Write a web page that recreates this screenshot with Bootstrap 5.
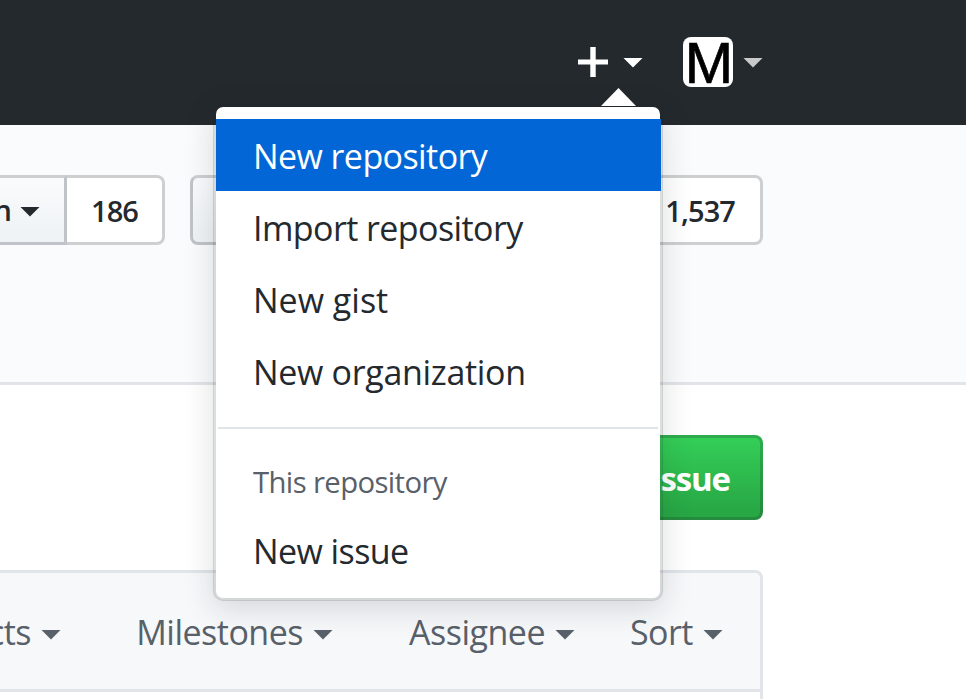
<!DOCTYPE html>
<html lang="en">
<head>
<meta charset="utf-8">
<meta name="viewport" content="width=device-width, initial-scale=1">
<title>Issues</title>
<link href="https://cdn.jsdelivr.net/npm/bootstrap@5.3.0/dist/css/bootstrap.min.css" rel="stylesheet">
<style>
body{font-family:"Open Sans","Noto Sans",sans-serif;font-size:34px;line-height:1.5;color:#24292e;overflow:hidden;height:699px}
.topbar{height:125px;background:#24292e;padding:0 203px 1px 0}
.topbar .tri{margin-top:1px}
.plus-icon{display:block;margin-right:15px}
.avatar{width:50px;height:50px;border-radius:8px;background:#fff;margin:0 10px 0 40px;display:block}
.avatar text{font:58px "Liberation Sans",sans-serif;stroke:#000;stroke-width:.7px}
.pagehead{height:260px;background:#fafbfc;border-bottom:3px solid #e1e4e8;padding:50px 203px 0 0}
.main-area{padding:50px 203px 0 0}
.tri{width:20px;height:10px;flex:none;background:currentColor;clip-path:polygon(0 0,100% 0,50% 100%)}
.dim{color:#c8c9ca}
.btn-social,.social-count{height:70px;border:3px solid #cdcfd1;font-size:29px;font-weight:600;line-height:66px;letter-spacing:-.9px;white-space:nowrap}
.btn-social{background:linear-gradient(#fafbfc,#eff3f6 90%)}
.watch{width:67px;border-color:#cdcfd1 #c0c4c9 #c0c4c9;border-left:0}
.watch .tri{margin:3px 24px 0 9px}
.social-count{background:#fff;border-left:0;border-radius:0 8px 8px 0}
.forks{width:98px}
.stars{width:104px;padding-right:25px}
.star{width:469px;margin-left:25px;border-radius:8px 0 0 8px;border-color:#cdcfd1 #c0c4c9 #c0c4c9}
.btn-issue,.btn-issue:hover{height:85px;width:240px;border-radius:8px;border:3px solid rgba(27,31,35,.2);background:linear-gradient(#34d058,#28a745 90%) border-box;color:#fff;font-size:33px;font-weight:700;line-height:82px;padding:0 30px 0 0;text-align:right;letter-spacing:-1.1px}
.list-box{margin-top:50px;margin-left:-20px;height:129px;border:3px solid #e1e4e8;border-bottom:0;border-radius:8px 8px 0 0}
.filters{height:119px;background:#f6f8fa;border-bottom:3px solid #e1e4e8;border-radius:5px 5px 0 0;color:#586069;padding:3px 37px 0 0;letter-spacing:-.5px;line-height:51px}
.filters .tri{margin:4px 0 0 10px}
.f2{width:272px}
.f3{width:242px}
.f4{width:148px}
.create-menu{left:213px;top:104px;width:450px;background:#fff;background-clip:padding-box;border:3px solid rgba(27,31,35,.15);border-radius:10px;box-shadow:0 8px 30px rgba(27,31,35,.15);padding:12px 0;z-index:5}
.create-menu .entry{display:block;height:72px;line-height:75px;padding-left:37px;color:#24292e;text-decoration:none;white-space:nowrap;letter-spacing:-.58px}
.create-menu .entry.current{background:#0366d6;color:#fff;margin-right:-1px}
.create-menu .airy{letter-spacing:0}
.create-menu .mid{letter-spacing:-.32px}
.menu-rule{height:2px;background:#e1e4e8;margin:20px 2px 0}
.menu-title{height:85px;line-height:107px;padding-left:37px;font-size:29.3px;color:#586069;letter-spacing:-.62px}
.pointer{right:24px;top:-19px;width:35px;height:18px;background:#fff;clip-path:polygon(50% 0,100% 100%,0 100%)}
</style>
</head>
<body class="position-relative">
<header class="topbar d-flex align-items-center justify-content-end text-white">
  <svg class="plus-icon" width="30" height="30" viewBox="0 0 30 30"><path fill="#fff" d="M12.3 0h5.4v12.6H30v4.9H17.7V30h-5.4V17.5H0v-4.9h12.3z"/></svg>
  <span class="tri"></span>
  <svg class="avatar" viewBox="0 0 50 50"><text x="26" y="45.8" text-anchor="middle">M</text></svg>
  <span class="tri dim"></span>
</header>
<section class="pagehead d-flex justify-content-end align-items-start">
  <div class="btn-social watch d-flex align-items-center justify-content-end"><span>h</span><span class="tri"></span></div>
  <div class="social-count forks text-center">186</div>
  <div class="btn-social star"></div>
  <div class="social-count stars text-end">1,537</div>
</section>
<main class="main-area">
  <div class="d-flex justify-content-end"><a class="btn btn-issue" href="#">New issue</a></div>
  <div class="list-box">
    <div class="filters d-flex align-items-center justify-content-end">
      <div class="d-flex align-items-center justify-content-end"><span>cts</span><span class="tri"></span></div>
      <div class="d-flex align-items-center justify-content-end f2"><span>Milestones</span><span class="tri"></span></div>
      <div class="d-flex align-items-center justify-content-end f3"><span>Assignee</span><span class="tri"></span></div>
      <div class="d-flex align-items-center justify-content-end f4"><span>Sort</span><span class="tri"></span></div>
    </div>
  </div>
</main>
<nav class="create-menu position-absolute">
  <span class="pointer position-absolute"></span>
  <a class="entry current" href="#">New repository</a>
  <a class="entry" href="#">Import repository</a>
  <a class="entry airy" href="#">New gist</a>
  <a class="entry mid" href="#">New organization</a>
  <div class="menu-rule"></div>
  <div class="menu-title">This repository</div>
  <a class="entry" href="#">New issue</a>
</nav>
<script src="https://cdn.jsdelivr.net/npm/bootstrap@5.3.0/dist/js/bootstrap.bundle.min.js"></script>
</body>
</html>
